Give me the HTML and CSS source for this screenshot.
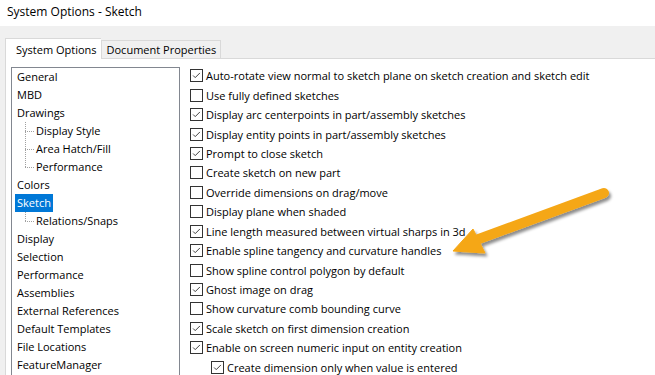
FILE: index.html
```html
<!DOCTYPE html>
<html lang="en">
<head>
    <meta charset="UTF-8">
    <title>System Options - Sketch</title>
    <link rel="stylesheet" href="styles.css">
</head>
<body>
    <div class="window">
        <div class="title-bar">System Options - Sketch</div>

        <div class="tab-row">
            <div class="tab active">System Options</div>
            <div class="tab">Document Properties</div>
        </div>

        <div class="tab-panel">
            <ul class="tree">
                <li class="tree-item">General</li>
                <li class="tree-item">MBD</li>
                <li class="tree-item">Drawings</li>
                <li class="tree-group">
                    <ul>
                        <li class="tree-item child">Display Style</li>
                        <li class="tree-item child">Area Hatch/Fill</li>
                        <li class="tree-item child">Performance</li>
                    </ul>
                </li>
                <li class="tree-item">Colors</li>
                <li class="tree-item"><span class="selected">Sketch</span></li>
                <li class="tree-group">
                    <ul>
                        <li class="tree-item child">Relations/Snaps</li>
                    </ul>
                </li>
                <li class="tree-item">Display</li>
                <li class="tree-item">Selection</li>
                <li class="tree-item">Performance</li>
                <li class="tree-item">Assemblies</li>
                <li class="tree-item">External References</li>
                <li class="tree-item">Default Templates</li>
                <li class="tree-item">File Locations</li>
                <li class="tree-item">FeatureManager</li>
            </ul>

            <div class="options">
                <label class="option"><span class="box"><svg viewBox="0 0 13 13"><polyline points="2.5,6.5 5,9 10.5,3.5"/></svg></span>Auto-rotate view normal to sketch plane on sketch creation and sketch edit</label>
                <label class="option"><span class="box"></span>Use fully defined sketches</label>
                <label class="option"><span class="box"><svg viewBox="0 0 13 13"><polyline points="2.5,6.5 5,9 10.5,3.5"/></svg></span>Display arc centerpoints in part/assembly sketches</label>
                <label class="option"><span class="box"><svg viewBox="0 0 13 13"><polyline points="2.5,6.5 5,9 10.5,3.5"/></svg></span>Display entity points in part/assembly sketches</label>
                <label class="option"><span class="box"><svg viewBox="0 0 13 13"><polyline points="2.5,6.5 5,9 10.5,3.5"/></svg></span>Prompt to close sketch</label>
                <label class="option"><span class="box"></span>Create sketch on new part</label>
                <label class="option"><span class="box"></span>Override dimensions on drag/move</label>
                <label class="option"><span class="box"></span>Display plane when shaded</label>
                <label class="option"><span class="box"><svg viewBox="0 0 13 13"><polyline points="2.5,6.5 5,9 10.5,3.5"/></svg></span>Line length measured between virtual sharps in 3d</label>
                <label class="option"><span class="box"><svg viewBox="0 0 13 13"><polyline points="2.5,6.5 5,9 10.5,3.5"/></svg></span>Enable spline tangency and curvature handles</label>
                <label class="option"><span class="box"></span>Show spline control polygon by default</label>
                <label class="option"><span class="box"><svg viewBox="0 0 13 13"><polyline points="2.5,6.5 5,9 10.5,3.5"/></svg></span>Ghost image on drag</label>
                <label class="option"><span class="box"></span>Show curvature comb bounding curve</label>
                <label class="option"><span class="box"><svg viewBox="0 0 13 13"><polyline points="2.5,6.5 5,9 10.5,3.5"/></svg></span>Scale sketch on first dimension creation</label>
                <label class="option"><span class="box"><svg viewBox="0 0 13 13"><polyline points="2.5,6.5 5,9 10.5,3.5"/></svg></span>Enable on screen numeric input on entity creation</label>
                <label class="option sub"><span class="box"><svg viewBox="0 0 13 13"><polyline points="2.5,6.5 5,9 10.5,3.5"/></svg></span>Create dimension only when value is entered</label>
            </div>
        </div>

        <!-- callout arrow pointing at the spline option -->
        <svg class="callout" viewBox="0 0 655 375">
            <defs>
                <filter id="drop" x="-20%" y="-20%" width="140%" height="140%">
                    <feGaussianBlur in="SourceAlpha" stdDeviation="1.6"/>
                    <feOffset dx="2" dy="3" result="blur"/>
                    <feFlood flood-color="#000" flood-opacity="0.45"/>
                    <feComposite in2="blur" operator="in"/>
                    <feMerge>
                        <feMergeNode/>
                        <feMergeNode in="SourceGraphic"/>
                    </feMerge>
                </filter>
            </defs>
            <g filter="url(#drop)" fill="#f5a716" stroke="#f5a716">
                <line x1="604" y1="193" x2="476" y2="240" stroke-width="10" stroke-linecap="round"/>
                <polygon points="453,251 473,229 485,253" stroke-width="1" stroke-linejoin="round"/>
            </g>
        </svg>
    </div>
</body>
</html>
```

FILE: styles.css
```css
body, html {
    margin: 0;
    padding: 0;
    background-color: #f0f0f0;
    font-family: "Segoe UI", "Open Sans", "Noto Sans", sans-serif;
    font-size: 11px;
    color: #000;
}

.window {
    position: relative;
    width: 655px;
    height: 375px;
    overflow: hidden;
}

.title-bar {
    height: 26px;
    line-height: 23px;
    padding-left: 7px;
    font-size: 12px;
    background-color: #ffffff;
}

/* tab strip */
.tab-row {
    display: flex;
    align-items: flex-end;
    padding: 12px 0 0 5px;
    height: 20px;
}

.tab {
    height: 17px;
    line-height: 17px;
    padding: 0 4px 0 5px;
    border: 1px solid #d9d9d9;
    border-bottom: none;
    background-color: #f0f0f0;
}

.tab.active {
    height: 20px;
    line-height: 21px;
    padding: 0 4px 0 10px;
    background-color: #ffffff;
    border-right: none;
    margin-bottom: -1px;
    position: relative;
}

.tab-panel {
    display: flex;
    align-items: flex-start;
    gap: 10px;
    margin-left: 5px;
    padding: 8px 0 0 5px;
    height: 400px;
    background-color: #ffffff;
    border-left: 1px solid #d9d9d9;
    border-top: 1px solid #d9d9d9;
}

/* left tree */
.tree {
    list-style: none;
    margin: 0;
    padding: 0 0 0 5px;
    width: 162px;
    height: 400px;
    border: 1px solid #828790;
    flex-shrink: 0;
}

.tree ul {
    list-style: none;
    margin: 0;
    padding: 0;
}

.tree-item {
    height: 18px;
    line-height: 18px;
    white-space: nowrap;
}

.tree-item .selected {
    display: inline-block;
    margin-left: -2px;
    padding: 0 2px;
    background-color: #0078d7;
    color: #ffffff;
}

.tree-group {
    position: relative;
}

/* dotted connector lines */
.tree-group::before {
    content: "";
    position: absolute;
    left: 8px;
    top: 0;
    bottom: 9px;
    border-left: 1px dotted #a0a0a0;
}

.tree-item.child {
    position: relative;
    padding-left: 19px;
}

.tree-item.child::before {
    content: "";
    position: absolute;
    left: 8px;
    top: 9px;
    width: 9px;
    border-top: 1px dotted #a0a0a0;
}

/* right option list */
.options {
    display: flex;
    flex-direction: column;
    margin-top: -1px;
}

.option {
    display: flex;
    align-items: center;
    height: 19.45px;
    white-space: nowrap;
}

.option.sub {
    padding-left: 21px;
}

.box {
    width: 11px;
    height: 11px;
    margin-right: 3px;
    border: 1px solid #333333;
    background-color: #ffffff;
    flex-shrink: 0;
}

.box svg {
    display: block;
    width: 11px;
    height: 11px;
    fill: none;
    stroke: #333333;
    stroke-width: 1.1;
}

.callout {
    position: absolute;
    left: 0;
    top: 0;
    width: 655px;
    height: 375px;
    pointer-events: none;
}
```
